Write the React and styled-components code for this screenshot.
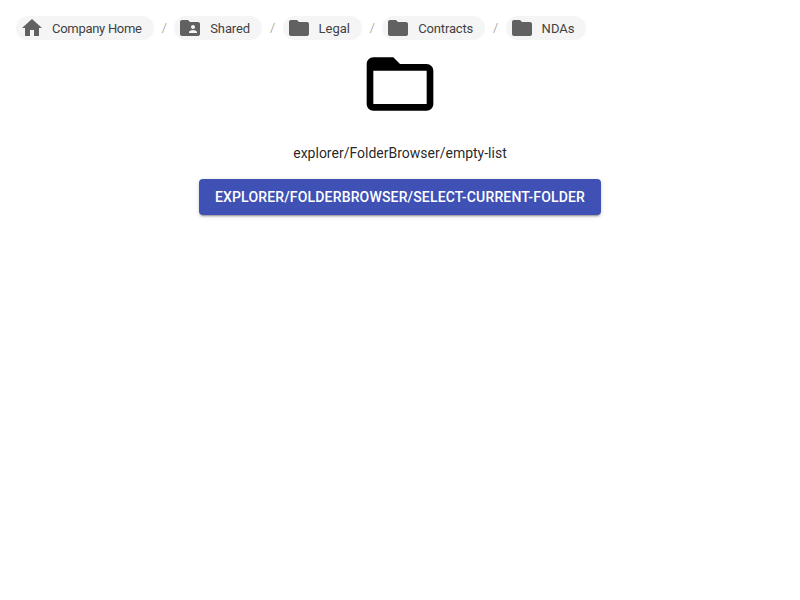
import React from 'react';
import styled, { createGlobalStyle } from 'styled-components';

const GlobalStyle = createGlobalStyle`
  *, *::before, *::after { box-sizing: border-box; }
  body {
    margin: 0;
    background: #fff;
    font-family: Roboto, "Liberation Sans", sans-serif;
    color: rgba(0, 0, 0, 0.87);
  }
`;

const Page = styled.main`
  display: flex;
  flex-direction: column;
  padding: 16px;
`;

const Trail = styled.ol`
  display: flex;
  align-items: center;
  list-style: none;
  margin: 0;
  padding: 0;
`;

const Separator = styled.li`
  flex: none;
  width: 4.5px;
  margin: 0 8px;
  font-size: 13px;
  font-weight: 300;
  line-height: 24px;
  color: rgba(0, 0, 0, 0.54);
`;

const Chip = styled.li`
  display: inline-flex;
  align-items: center;
  height: 24px;
  border-radius: 16px;
  background: #f5f5f5;
  color: #424242;
  font-size: 13px;
  letter-spacing: ${({ $tracking }) => $tracking}px;
  white-space: nowrap;
`;

const ChipIcon = styled.svg`
  width: 24px;
  height: 24px;
  margin-left: 4px;
  margin-right: -4px;
  fill: #616161;
`;

const ChipLabel = styled.span`
  padding: 0 12px;
`;

const EmptyState = styled.section`
  display: flex;
  flex-direction: column;
  align-items: center;
`;

const EmptyIcon = styled.svg`
  width: 80px;
  height: 80px;
  margin-top: 4px;
  fill: #000;
`;

const Message = styled.p`
  margin: 19px 0 16px;
  font-size: 14px;
  line-height: 20px;
`;

const Button = styled.button`
  height: 36px;
  padding: 6px 16px;
  border: 0;
  border-radius: 4px;
  background: #3f51b5;
  color: #fff;
  font: 500 14px/24px Roboto, "Liberation Sans", sans-serif;
  letter-spacing: 0.165px;
  text-transform: uppercase;
  box-shadow: 0 3px 1px -2px rgba(0, 0, 0, 0.2),
    0 2px 2px 0 rgba(0, 0, 0, 0.14), 0 1px 5px 0 rgba(0, 0, 0, 0.12);
`;

const icons = {
  home: 'M10 20v-6h4v6h5v-8h3L12 3 2 12h3v8z',
  shared:
    'M20 6h-8l-2-2H4c-1.1 0-1.99.9-1.99 2L2 18c0 1.1.9 2 2 2h16c1.1 0 2-.9 2-2V8c0-1.1-.9-2-2-2zm-5 3c1.1 0 2 .9 2 2s-.9 2-2 2-2-.9-2-2 .9-2 2-2zm4 8h-8v-1c0-1.33 2.67-2 4-2s4 .67 4 2v1z',
  folder:
    'M10 4H4c-1.1 0-1.99.9-1.99 2L2 18c0 1.1.9 2 2 2h16c1.1 0 2-.9 2-2V8c0-1.1-.9-2-2-2h-8l-2-2z',
};

const crumbs = [
  { label: 'Company Home', icon: 'home', tracking: -0.29 },
  { label: 'Shared', icon: 'shared', tracking: -0.1 },
  { label: 'Legal', icon: 'folder', tracking: -0.04 },
  { label: 'Contracts', icon: 'folder', tracking: -0.17 },
  { label: 'NDAs', icon: 'folder', tracking: 0 },
];

export default function App() {
  return (
    <Page>
      <GlobalStyle />
      <Trail>
        {crumbs.map(({ label, icon, tracking }, index) => (
          <React.Fragment key={label}>
            {index > 0 && <Separator aria-hidden="true">/</Separator>}
            <Chip $tracking={tracking}>
              <ChipIcon viewBox="0 0 24 24">
                <path d={icons[icon]} />
              </ChipIcon>
              <ChipLabel>{label}</ChipLabel>
            </Chip>
          </React.Fragment>
        ))}
      </Trail>
      <EmptyState>
        <EmptyIcon viewBox="0 0 24 24">
          <path d="M20 6h-8l-2-2H4c-1.1 0-1.99.9-1.99 2L2 18c0 1.1.9 2 2 2h16c1.1 0 2-.9 2-2V8c0-1.1-.9-2-2-2zm0 12H4V8h16v10z" />
        </EmptyIcon>
        <Message>explorer/FolderBrowser/empty-list</Message>
        <Button>explorer/FolderBrowser/select-current-folder</Button>
      </EmptyState>
    </Page>
  );
}
